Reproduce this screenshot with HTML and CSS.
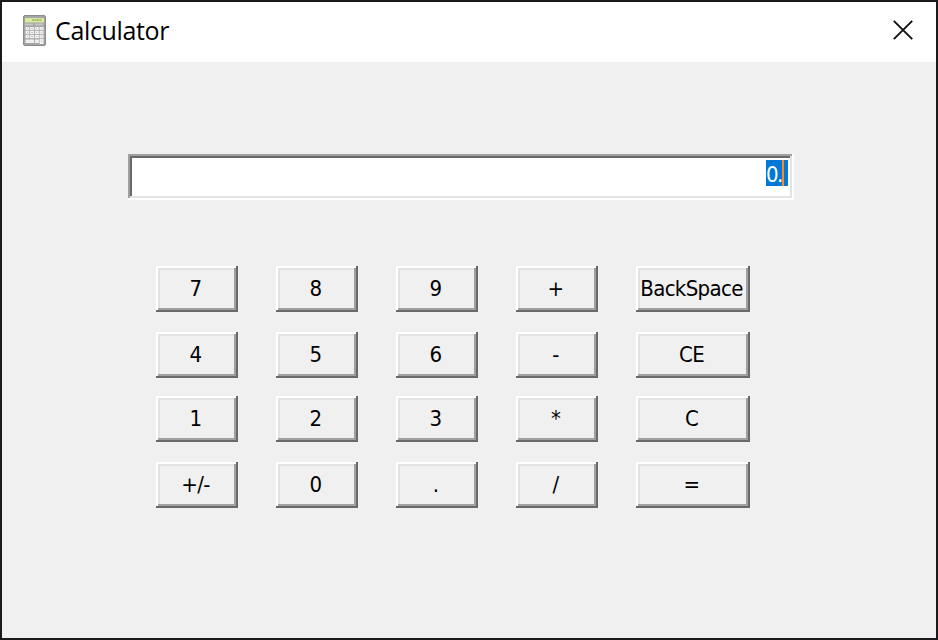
FILE: index.html
```
<!DOCTYPE html>
<html lang="en">
<head>
<meta charset="utf-8">
<title>Calculator</title>
<link rel="stylesheet" href="styles.css">
</head>
<body>
<div class="window">
  <header class="titlebar">
    <svg class="app-icon" width="24" height="32" viewBox="0 0 24 32" aria-hidden="true">
      <rect x=".5" y=".5" width="22" height="30" rx="1.5" fill="#a4a4a4" stroke="#8c8c8c"/>
      <rect x="2" y="3" width="19" height="4.500" fill="#d6eaa0"/>
      <path d="M9 5h10" stroke="#9cb26c" stroke-width="1.500" stroke-dasharray="2 .5"/>
      <path d="M2 9.500h8M12 9.500h8" stroke="#c6c6c6" stroke-width="2"/>
      <g fill="#f0f0f0">
        <path d="M2.500 12h3.800v3.300H2.500zM7 12h4v3.300H7zM11.800 12h4v3.300h-4zM16.500 12h4v3.300h-4z"/>
        <path d="M2.500 16h3.800v3.300H2.500zM7 16h4v3.300H7zM11.800 16h4v3.300h-4zM16.500 16h4v3.300h-4z"/>
        <path d="M2.500 20h3.800v3.300H2.500zM7 20h4v3.300H7zM11.800 20h4v3.300h-4zM16.500 20h4v3.300h-4z"/>
        <path d="M2.500 24.500h8.500v3.500H2.500zM11.800 24.500h4v3.500h-4zM16.500 24h4v5h-4z"/>
      </g>
      <path d="M4 13.500h1M8 13.500h2M13 13.500h1M18 13.500h1M4 17.500h1M8 17.500h2M13 17.500h1M18 17.500h1M4 21.500h1M8 21.500h2M13 21.500h1M18 21.500h1M18 26h1" stroke="#c4c4c4"/>
    </svg>
    <h1 class="title">Calculator</h1>
    <svg class="close" width="20" height="20" viewBox="0 0 20 20" role="img" aria-label="Close">
      <path d="M.8.8l18.400 18.400M19.200.8L.8 19.200" stroke="#111" stroke-width="1.900"/>
    </svg>
  </header>
  <main class="body">
    <div class="display"><span class="value">0.<i class="caret"></i></span></div>
    <div class="keys">
      <button>7</button><button>8</button><button>9</button><button>+</button><button>BackSpace</button>
      <button>4</button><button>5</button><button>6</button><button>-</button><button>CE</button>
      <button>1</button><button>2</button><button>3</button><button>*</button><button>C</button>
      <button>+/-</button><button>0</button><button>.</button><button>/</button><button>=</button>
    </div>
  </main>
</div>
</body>
</html>
```
FILE: styles.css
```
* { box-sizing: border-box; }
body { margin: 0; }
.window {
  width: 938px;
  height: 640px;
  border: 2px solid #1b191b;
  background: #f0f0f0;
  font-family: "DejaVu Sans Condensed", "DejaVu Sans", sans-serif;
  font-stretch: condensed;
  color: #000;
}
.titlebar {
  height: 60px;
  display: flex;
  align-items: center;
  padding: 0 23px 0 21px;
  background: #fff;
}
.app-icon { margin-top: -2px; }
.title {
  margin: -5px auto 0 8px;
  font-family: "Open Sans", sans-serif;
  font-stretch: normal;
  font-weight: 400;
  font-size: 25px;
  line-height: 34px;
  letter-spacing: -.35px;
}
.close { margin-top: -4px; }
.body { padding: 92px 0 0 126px; }
.display {
  width: 666px;
  height: 46px;
  padding: 6px;
  display: flex;
  justify-content: flex-end;
  background: #fff;
  box-shadow: inset -2px -2px #fff, inset 2px 2px #a0a0a0, inset -4px -4px #e3e3e3, inset 4px 4px #696969;
}
.value {
  position: relative;
  width: 22px;
  height: 26px;
  background: #0078d7;
  color: #fff;
  font-size: 22px;
  line-height: 29px;
  letter-spacing: -1.500px;
}
.caret {
  position: absolute;
  top: 0;
  right: 4px;
  width: 2px;
  height: 26px;
  background: #ff8728;
}
.keys {
  margin: 66px 0 0 28px;
  display: grid;
  grid-template-columns: repeat(4, 82px) 114px;
  grid-template-rows: 66px 64px 66px 46px;
  column-gap: 38px;
}
.keys button {
  height: 46px;
  padding: 0 5px 0 2px;
  border: 0;
  background: #f0f0f0;
  color: #000;
  font: inherit;
  font-size: 22px;
  line-height: 26px;
  letter-spacing: -.65px;
  white-space: nowrap;
  box-shadow: inset -2px -2px #696969, inset 2px 2px #fff, inset -4px -4px #a0a0a0, inset 4px 4px #e3e3e3;
}
```
